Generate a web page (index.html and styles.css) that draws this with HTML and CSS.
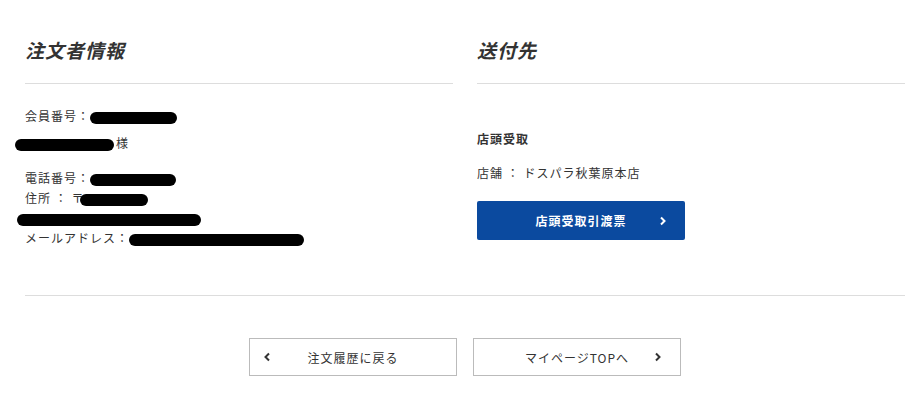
FILE: index.html
```html
<!DOCTYPE html>
<html>
<head>
    <title>注文詳細</title>
    <link rel="stylesheet" href="styles.css">
</head>
<body>
    <div class="page">
        <div class="columns">
            <section class="col">
                <h2 class="col-title">注文者情報</h2>
                <div class="col-body">
                    <p class="row">会員番号：<span class="mask mask-member"></span></p>
                    <p class="row row-name"><span class="mask mask-name"></span>様</p>
                    <div class="row-group">
                        <p class="row">電話番号：<span class="mask mask-tel"></span></p>
                        <p class="row">住所 ： 〒<span class="mask mask-zip"></span></p>
                        <p class="row"><span class="mask mask-addr"></span></p>
                        <p class="row">メールアドレス：<span class="mask mask-mail"></span></p>
                    </div>
                </div>
            </section>
            <section class="col">
                <h2 class="col-title">送付先</h2>
                <div class="col-body">
                    <p class="row row-strong">店頭受取</p>
                    <p class="row row-store">店舗 ： ドスパラ秋葉原本店</p>
                    <a href="#" class="btn-blue">
                        <span>店頭受取引渡票</span>
                        <svg class="chev chev-right" width="8" height="10" viewBox="0 0 8 10"><polyline points="2,1.5 5.5,5 2,8.5" fill="none" stroke="#fff" stroke-width="2"/></svg>
                    </a>
                </div>
            </section>
        </div>
        <div class="divider"></div>
        <div class="nav-buttons">
            <a href="#" class="btn-line">
                <svg class="chev chev-left" width="8" height="10" viewBox="0 0 8 10"><polyline points="6,1.5 2.5,5 6,8.5" fill="none" stroke="#333" stroke-width="2"/></svg>
                <span>注文履歴に戻る</span>
            </a>
            <a href="#" class="btn-line">
                <span>マイページTOPへ</span>
                <svg class="chev chev-right" width="8" height="10" viewBox="0 0 8 10"><polyline points="2,1.5 5.5,5 2,8.5" fill="none" stroke="#333" stroke-width="2"/></svg>
            </a>
        </div>
    </div>
</body>
</html>
```

FILE: styles.css
```css
body {
    margin: 0;
    background-color: #fff;
    color: #333;
    font-family: "Noto Sans CJK JP", "Noto Sans", sans-serif;
}

.page {
    width: 880px;
    padding: 30px 0 0 25px;
}

.columns {
    display: flex;
    gap: 24px;
}

.col {
    width: 428px;
}

.col-title {
    margin: 0;
    font-size: 19px;
    font-style: italic;
    font-weight: bold;
    line-height: 40px;
    letter-spacing: 1px;
    padding-bottom: 13px;
    border-bottom: 1px solid #ddd;
}

.col-body {
    padding-top: 22px;
}

.row {
    margin: 0;
    font-size: 12px;
    line-height: 20px;
    letter-spacing: 1px;
    white-space: nowrap;
}

.row-name {
    margin-top: 7px;
}

.row-group {
    margin-top: 15px;
}

.row-strong {
    margin-top: 23px;
    font-weight: bold;
}

.row-store {
    margin-top: 14px;
}

.mask {
    display: inline-block;
    height: 12px;
    background-color: #000;
    border-radius: 6px;
    vertical-align: middle;
}

.mask-member {
    width: 87px;
}

.mask-name {
    width: 99px;
    margin-left: -10px;
    margin-right: 2px;
}

.mask-tel {
    width: 86px;
}

.mask-zip {
    width: 68px;
    margin-left: -4px;
}

.mask-addr {
    width: 184px;
    margin-left: -8px;
}

.mask-mail {
    width: 175px;
}

.btn-blue {
    margin-top: 18px;
    width: 208px;
    height: 39px;
    box-sizing: border-box;
    display: flex;
    align-items: center;
    justify-content: center;
    position: relative;
    background-color: #0b4a9f;
    border-radius: 2px;
    color: #fff;
    font-size: 12px;
    font-weight: bold;
    letter-spacing: 1px;
    text-decoration: none;
}

.chev {
    position: absolute;
    top: 50%;
    margin-top: -5px;
}

.chev-right {
    right: 18px;
}

.chev-left {
    left: 13px;
}

.divider {
    margin-top: 47px;
    border-top: 1px solid #ddd;
}

.nav-buttons {
    display: flex;
    justify-content: center;
    gap: 16px;
    margin-top: 42px;
}

.btn-line {
    position: relative;
    width: 208px;
    height: 38px;
    box-sizing: border-box;
    display: flex;
    align-items: center;
    justify-content: center;
    border: 1px solid #bbb;
    color: #333;
    font-size: 12px;
    letter-spacing: 1px;
    text-decoration: none;
}
```
